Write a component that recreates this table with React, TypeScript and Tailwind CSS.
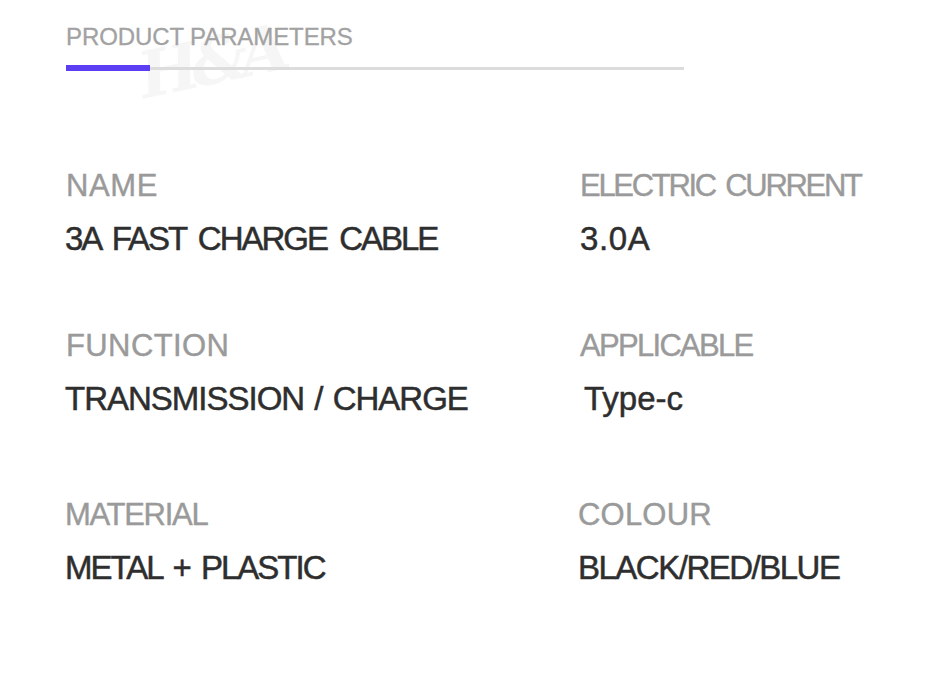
const FONT = "font-['Liberation_Sans',Arial,sans-serif]";

interface Param {
  readonly label: string;
  readonly value: string;
  /** per-item tracking to get close to the original Futura widths */
  readonly labelClass: string;
  readonly valueClass: string;
}

interface ParamRow {
  readonly rowClass: string;
  readonly left: Param;
  readonly right: Param;
}

const ROWS: ReadonlyArray<ParamRow> = [
  {
    rowClass: 'mt-[99px]',
    left: {
      label: 'NAME',
      value: '3A FAST CHARGE CABLE',
      labelClass: 'tracking-[0.6px] pl-[1px]',
      valueClass: 'tracking-[-2px] [word-spacing:5px]',
    },
    right: {
      label: 'ELECTRIC CURRENT',
      value: '3.0A',
      labelClass: 'tracking-[-2.3px] [word-spacing:4px]',
      valueClass: 'tracking-[0.6px]',
    },
  },
  {
    rowClass: 'mt-[75px]',
    left: {
      label: 'FUNCTION',
      value: 'TRANSMISSION / CHARGE',
      labelClass: 'tracking-[0.4px] pl-[1px]',
      valueClass: 'tracking-[-1px] [word-spacing:2px]',
    },
    right: {
      label: 'APPLICABLE',
      value: 'Type-c',
      labelClass: 'tracking-[-1.7px]',
      valueClass: 'tracking-[0px] pl-[4px]',
    },
  },
  {
    rowClass: 'mt-[84px]',
    left: {
      label: 'MATERIAL',
      value: 'METAL + PLASTIC',
      labelClass: 'tracking-[-1.3px]',
      valueClass: 'tracking-[-2px] [word-spacing:4px]',
    },
    right: {
      label: 'COLOUR',
      value: 'BLACK/RED/BLUE',
      labelClass: 'tracking-[0.2px] -ml-[2px]',
      valueClass: 'tracking-[-1.5px] -ml-[2px]',
    },
  },
];

function ParamCell({ item }: { item: Param }) {
  return (
    <div className="flex flex-col">
      <p
        className={`text-[31px] leading-none whitespace-nowrap text-[#9a9a9a] [-webkit-text-stroke:0.4px_#9a9a9a] ${item.labelClass}`}
      >
        {item.label}
      </p>
      <p
        className={`mt-[21px] text-[33px] leading-none whitespace-nowrap text-[#2e2e2e] [-webkit-text-stroke:0.5px_#2e2e2e] ${item.valueClass}`}
      >
        {item.value}
      </p>
    </div>
  );
}

export default function App() {
  return (
    <div className={`relative h-[679px] w-[930px] overflow-hidden bg-white ${FONT}`}>
      {/* faint brand watermark behind the heading */}
      <span
        aria-hidden
        className="pointer-events-none absolute left-[138px] top-[30px] -rotate-12 select-none font-['DejaVu_Serif',serif] text-[64px] font-bold italic leading-none tracking-[-8px] text-[#f6f6f6]"
      >
        H&amp;A
      </span>

      <header className="relative pl-[66px] pt-[25px]">
        <h1 className="text-[24px] leading-none tracking-[-0.1px] text-[#a2a2a2] [-webkit-text-stroke:0.3px_#a2a2a2]">
          PRODUCT PARAMETERS
        </h1>
        <div className="mt-[16px] flex h-[6px] w-[618px] items-center">
          <div className="h-[6px] w-[84px] bg-[#5b3ef2]" />
          <div className="h-[3px] flex-1 bg-[#dcdcdc]" />
        </div>
      </header>

      <section className="relative pl-[65px]">
        {ROWS.map((row) => (
          <div key={row.left.label} className={`grid grid-cols-[515px_1fr] ${row.rowClass}`}>
            <ParamCell item={row.left} />
            <ParamCell item={row.right} />
          </div>
        ))}
      </section>
    </div>
  );
}
